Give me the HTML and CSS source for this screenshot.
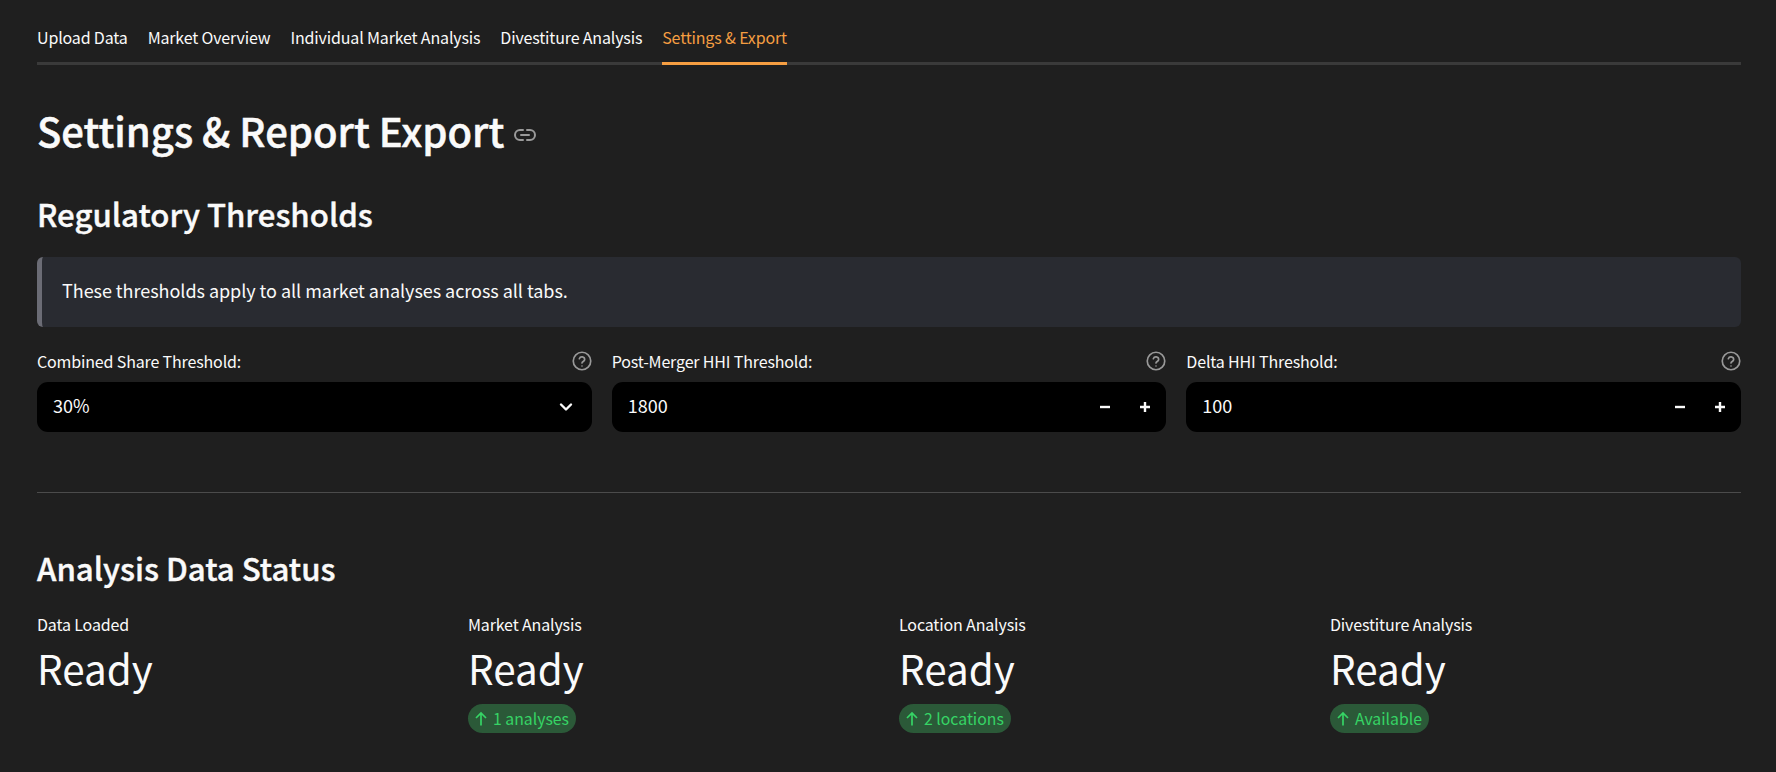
FILE: index.html
```html
<!DOCTYPE html>
<html lang="en">
<head>
<meta charset="utf-8">
<title>Settings &amp; Report Export</title>
<link rel="stylesheet" href="styles.css">
</head>
<body>
<main class="page">
  <nav class="tabs">
    <a class="tab">Upload Data</a>
    <a class="tab">Market Overview</a>
    <a class="tab">Individual Market Analysis</a>
    <a class="tab">Divestiture Analysis</a>
    <a class="tab active">Settings &amp; Export</a>
  </nav>

  <h1 class="title">Settings &amp; Report Export
    <svg class="link-icon" viewBox="0 0 24 24" width="24" height="24" fill="none" stroke="currentColor" stroke-width="2" stroke-linecap="round" stroke-linejoin="round"><path d="M10 7H7a5 5 0 0 0 0 10h3"/><path d="M14 7h3a5 5 0 0 1 0 10h-3"/><path d="M8 12h8"/></svg>
  </h1>

  <h2 class="section first">Regulatory Thresholds</h2>
  <div class="info">These thresholds apply to all market analyses across all tabs.</div>

  <section class="fields">
    <div class="field">
      <div class="label-row"><label>Combined Share Threshold:</label>
        <svg class="help" viewBox="0 0 24 24" width="20" height="20" fill="none" stroke="currentColor" stroke-width="2" stroke-linecap="round"><circle cx="12" cy="12" r="10.5"/><path d="M8.8 9.2a3.3 3.3 0 0 1 6.4 1c0 2.2-3.2 2.6-3.2 4.3"/><path d="M12 18h.01"/></svg>
      </div>
      <div class="control"><span>30%</span>
        <svg class="chevron" viewBox="0 0 16 16" width="16" height="16" fill="none" stroke="currentColor" stroke-width="2.400" stroke-linecap="round" stroke-linejoin="round"><path d="M3 5.5l5 5 5-5"/></svg>
      </div>
    </div>
    <div class="field">
      <div class="label-row"><label>Post-Merger HHI Threshold:</label>
        <svg class="help" viewBox="0 0 24 24" width="20" height="20" fill="none" stroke="currentColor" stroke-width="2" stroke-linecap="round"><circle cx="12" cy="12" r="10.5"/><path d="M8.8 9.2a3.3 3.3 0 0 1 6.4 1c0 2.2-3.2 2.6-3.2 4.3"/><path d="M12 18h.01"/></svg>
      </div>
      <div class="control"><span>1800</span>
        <div class="steppers">
          <svg viewBox="0 0 12 12" width="12" height="12" stroke="currentColor" stroke-width="2.400"><path d="M1 6h10"/></svg>
          <svg viewBox="0 0 12 12" width="12" height="12" stroke="currentColor" stroke-width="2.400"><path d="M1 6h10M6 1v10"/></svg>
        </div>
      </div>
    </div>
    <div class="field">
      <div class="label-row"><label>Delta HHI Threshold:</label>
        <svg class="help" viewBox="0 0 24 24" width="20" height="20" fill="none" stroke="currentColor" stroke-width="2" stroke-linecap="round"><circle cx="12" cy="12" r="10.5"/><path d="M8.8 9.2a3.3 3.3 0 0 1 6.4 1c0 2.2-3.2 2.6-3.2 4.3"/><path d="M12 18h.01"/></svg>
      </div>
      <div class="control"><span>100</span>
        <div class="steppers">
          <svg viewBox="0 0 12 12" width="12" height="12" stroke="currentColor" stroke-width="2.400"><path d="M1 6h10"/></svg>
          <svg viewBox="0 0 12 12" width="12" height="12" stroke="currentColor" stroke-width="2.400"><path d="M1 6h10M6 1v10"/></svg>
        </div>
      </div>
    </div>
  </section>

  <hr class="divider">

  <h2 class="section status">Analysis Data Status</h2>
  <section class="metrics">
    <div class="metric"><div class="metric-label">Data Loaded</div><div class="metric-value">Ready</div></div>
    <div class="metric"><div class="metric-label">Market Analysis</div><div class="metric-value">Ready</div><div class="delta"><svg viewBox="0 0 12 14" width="12" height="15" fill="none" stroke="currentColor" stroke-width="1.700"><path d="M6 14V1.500M1 6.500L6 1.500l5 5"/></svg>1 analyses</div></div>
    <div class="metric"><div class="metric-label">Location Analysis</div><div class="metric-value">Ready</div><div class="delta"><svg viewBox="0 0 12 14" width="12" height="15" fill="none" stroke="currentColor" stroke-width="1.700"><path d="M6 14V1.500M1 6.500L6 1.500l5 5"/></svg>2 locations</div></div>
    <div class="metric"><div class="metric-label">Divestiture Analysis</div><div class="metric-value">Ready</div><div class="delta"><svg viewBox="0 0 12 14" width="12" height="15" fill="none" stroke="currentColor" stroke-width="1.700"><path d="M6 14V1.500M1 6.500L6 1.500l5 5"/></svg>Available</div></div>
  </section>
</main>
</body>
</html>
```
FILE: styles.css
```css
* { box-sizing: border-box; }
html, body { margin: 0; height: 100%; }
body {
  background: #1f1f1f;
  color: #fafafa;
  font-family: "Noto Sans CJK SC", "Noto Sans", sans-serif;
  overflow: hidden;
}
.page { padding: 0 35px 0 37px; }

.tabs {
  display: flex;
  gap: 20px;
  height: 65px;
  border-bottom: 3px solid #3a3a3a;
}
.tab {
  font-size: 16px;
  letter-spacing: -0.16px;
  line-height: 22px;
  padding-top: 26px;
  height: 65px;
  color: #fafafa;
}
.tab.active { color: #f59e42; border-bottom: 3px solid #f59e42; }

.title {
  margin: 35px 0 0 0;
  padding-bottom: 1px;
  font-size: 40px;
  line-height: 60px;
  font-weight: 500;
  -webkit-text-stroke: 0.5px currentColor;
  display: flex;
  align-items: center;
  gap: 9px;
}
.link-icon { color: #9a9a9a; margin-top: 10px; }

.section {
  margin: 0;
  font-size: 31.2px;
  line-height: 44px;
  font-weight: 500;
  -webkit-text-stroke: 0.4px currentColor;
}
.section.first { margin-top: 31px; }
.section.status { margin-top: 53px; }

.info {
  margin-top: 21px;
  height: 70px;
  background: #292b31;
  border-left: 5px solid #6b6c75;
  border-radius: 6px;
  padding: 0 0 4px 20px;
  display: flex;
  align-items: center;
  font-size: 18px;
  letter-spacing: -0.04px;
}

.fields {
  margin-top: 21px;
  display: grid;
  grid-template-columns: repeat(3, 1fr);
  gap: 20px;
}
.label-row {
  display: flex;
  justify-content: space-between;
  align-items: center;
  height: 34px;
  padding-bottom: 8px;
}
.label-row label { font-size: 16px; letter-spacing: -0.15px; line-height: 22px; }
.help { color: #999; }
.control {
  height: 50px;
  background: #000;
  border-radius: 11px;
  display: flex;
  align-items: center;
  justify-content: space-between;
  padding: 0 16px;
  font-size: 18px;
}
.control span { padding-bottom: 4px; }
.chevron { color: #fafafa; margin-right: 2px; }
.steppers { display: flex; gap: 28px; margin-right: -1px; color: #fafafa; }

.divider { margin: 60px 0 0; border: 0; border-top: 1px solid #4b4b4b; }

.metrics {
  margin-top: 23px;
  display: grid;
  grid-template-columns: repeat(4, 1fr);
  gap: 20px;
}
.metric-label { font-size: 16px; letter-spacing: -0.15px; line-height: 22px; }
.metric-value { font-size: 40.4px; line-height: 60px; margin-top: 3px; }
.delta {
  display: inline-flex;
  align-items: center;
  gap: 6px;
  margin-top: 6px;
  height: 29px;
  padding: 0 7px;
  border-radius: 15px;
  background: #2b5938;
  color: #36d465;
  font-size: 15.8px;
}
```
